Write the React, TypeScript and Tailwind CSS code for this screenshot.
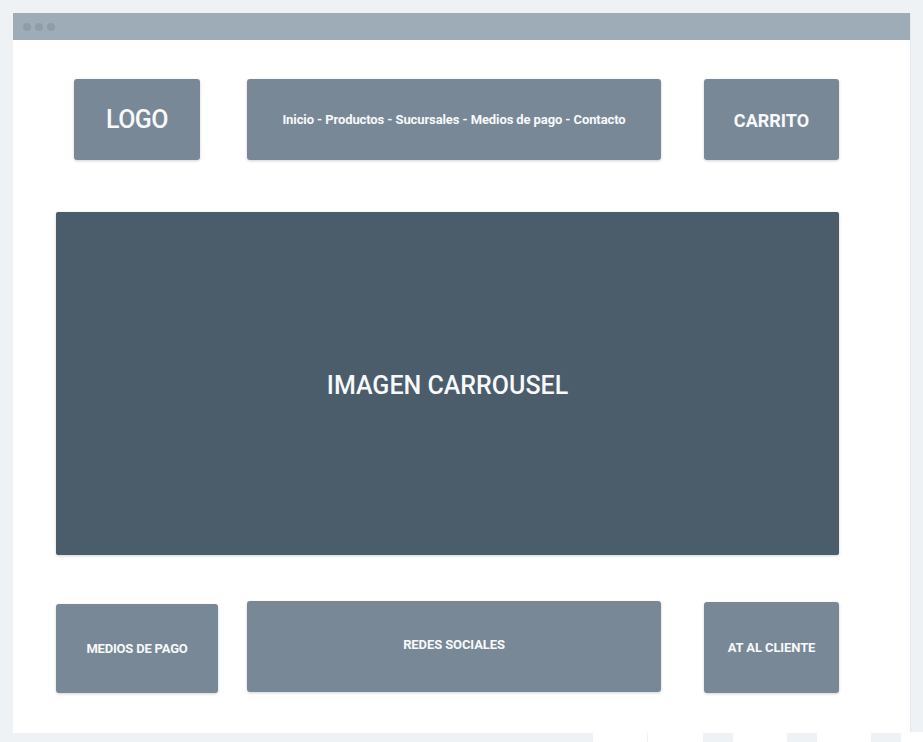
import React from "react";

const box =
  "bg-[#798897] rounded-[3px] shadow-[0_1px_3px_rgba(0,0,0,0.18)] flex items-center justify-center text-[#f7f9fa] shrink-0";

export default function App() {
  return (
    <div
      className="w-[923px] h-[742px] bg-[#eef2f5] overflow-hidden pt-[13px]"
      style={{ fontFamily: "Roboto, 'Liberation Sans', sans-serif" }}
    >
      <div className="ml-[13px] w-[898px] bg-white border-r border-[#e4e9ee]">
        <div className="h-[27px] bg-[#9eacb8] flex items-center gap-[4px] pl-[10px]">
          <div className="w-[8px] h-[8px] rounded-full bg-[#8f9dab]" />
          <div className="w-[8px] h-[8px] rounded-full bg-[#8f9dab]" />
          <div className="w-[8px] h-[8px] rounded-full bg-[#8f9dab]" />
        </div>
        <div className="h-[693px] pl-[43px] pt-[39px]">
          <div className="w-[783px] flex">
            <div className={`${box} ml-[18px] w-[126px] h-[81px] text-[25px] font-medium tracking-[-0.6px] pt-[1px]`}>
              LOGO
            </div>
            <div className={`${box} ml-[47px] w-[414px] h-[81px] text-[13px] font-bold tracking-[-0.1px]`}>
              Inicio - Productos - Sucursales - Medios de pago - Contacto
            </div>
            <div className={`${box} ml-[43px] w-[135px] h-[81px] text-[18px] font-bold tracking-[0px] pt-[1px]`}>
              CARRITO
            </div>
          </div>
          <div className="mt-[52px] w-[783px] h-[343px] bg-[#4b5c6b] rounded-[2px] shadow-[0_1px_3px_rgba(0,0,0,0.18)] flex items-center justify-center text-[#f7f9fa] text-[25px] font-medium tracking-[0px] pt-[4px]">
            IMAGEN CARROUSEL
          </div>
          <div className="mt-[46px] w-[783px] flex items-start">
            <div className={`${box} mt-[3px] w-[162px] h-[89px] text-[13px] font-bold tracking-[-0.2px]`}>
              MEDIOS DE PAGO
            </div>
            <div className={`${box} ml-[29px] w-[414px] h-[91px] text-[13px] font-bold tracking-[-0.1px] pb-[3px]`}>
              REDES SOCIALES
            </div>
            <div className={`${box} ml-[43px] mt-[1px] w-[135px] h-[91px] text-[13px] font-bold tracking-[-0.1px]`}>
              AT AL CLIENTE
            </div>
          </div>
        </div>
      </div>
      <div className="flex mt-[-1px] h-[12px]">
        <div className="shrink-0 ml-[593px] w-[54px] bg-white rounded-t-[3px]" />
        <div className="shrink-0 ml-[1px] w-[55px] bg-white rounded-t-[3px]" />
        <div className="shrink-0 ml-[30px] w-[54px] bg-white rounded-t-[3px]" />
        <div className="shrink-0 ml-[30px] w-[54px] bg-white rounded-t-[3px]" />
        <div className="shrink-0 ml-[30px] w-[54px] bg-white rounded-t-[3px]" />
      </div>
    </div>
  );
}
